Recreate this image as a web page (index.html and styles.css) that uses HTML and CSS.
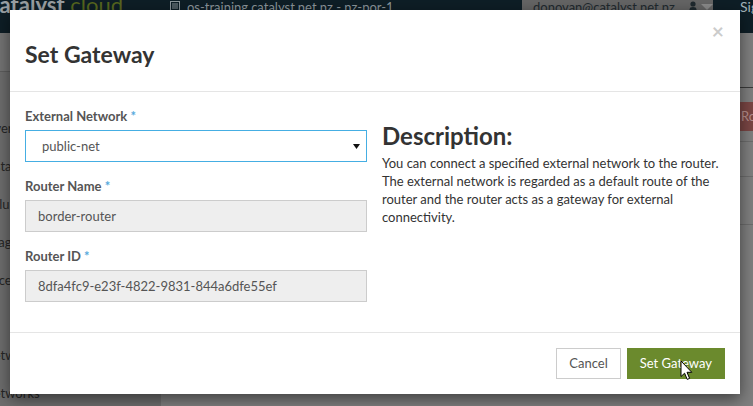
FILE: index.html
```html
<!DOCTYPE html>
<html lang="en">
<head>
<meta charset="utf-8">
<title>Set Gateway</title>
<link rel="stylesheet" href="styles.css">
</head>
<body>
<div class="page">
  <header class="topbar">
    <div class="brand"><span class="brand-strong">catalyst</span> <span class="brand-light">cloud</span></div>
    <div class="context">
      <svg class="context-icon" width="10" height="10" viewBox="0 0 10 10" aria-hidden="true"><rect x="0.5" y="0.5" width="9" height="9" fill="none" stroke="currentColor"/><path d="M2 3h6M2 5h6M2 7h6" stroke="currentColor"/></svg>
      <span>os-training.catalyst.net.nz - nz-por-1</span>
    </div>
    <div class="user">
      <span class="user-name">donovan@catalyst.net.nz</span>
      <svg class="user-icon" width="8" height="12" viewBox="0 0 8 12" aria-hidden="true"><circle cx="4" cy="3" r="2.6" fill="currentColor"/><path d="M0.5 12V8.5C0.5 6.8 1.8 6 4 6s3.5.8 3.5 2.5V12z" fill="currentColor"/></svg>
      <svg class="user-caret" width="12" height="8" viewBox="0 0 12 8" aria-hidden="true"><path d="M0 1h12L6 7z" fill="currentColor"/></svg>
    </div>
    <a class="signout">Sign Out</a>
  </header>
  <div class="layout">
    <nav class="sidebar">
      <div class="sidebar-project">Project</div>
      <div class="nav-group">Compute</div>
      <a class="nav-item">Overview</a>
      <a class="nav-item">Instances</a>
      <a class="nav-item">Volumes</a>
      <a class="nav-item">Images</a>
      <a class="nav-item">Access &amp; Security</a>
      <div class="nav-group">Network</div>
      <a class="nav-item">Network Topology</a>
      <a class="nav-item">Networks</a>
    </nav>
    <main class="content">
      <div class="page-header">Routers</div>
      <div class="toolbar"><span class="btn-danger">Routers</span></div>
      <div class="table">
        <div class="table-row head">Name</div>
        <div class="table-row tall">border-router</div>
        <div class="table-row">Displaying 1 item</div>
      </div>
    </main>
  </div>
</div>

<div class="modal" role="dialog">
  <div class="modal-header">
    <h3 class="modal-title">Set Gateway</h3>
    <span class="close">&times;</span>
  </div>
  <div class="modal-body">
    <div class="form-col">
      <div class="form-group">
        <label class="label">External Network <span class="req">*</span></label>
        <div class="select-wrap">
          <select class="select"><option>public-net</option></select>
          <svg class="select-arrow" width="7" height="5" viewBox="0 0 7 5" aria-hidden="true"><path d="M0 0h7L3.5 5z" fill="#111"/></svg>
        </div>
      </div>
      <div class="form-group">
        <label class="label">Router Name <span class="req">*</span></label>
        <input class="input" value="border-router" disabled>
      </div>
      <div class="form-group">
        <label class="label">Router ID <span class="req">*</span></label>
        <input class="input" value="8dfa4fc9-e23f-4822-9831-844a6dfe55ef" disabled>
      </div>
    </div>
    <div class="desc-col">
      <h3 class="desc-title">Description:</h3>
      <p class="desc-text">You can connect a specified external network to the router. The external network is regarded as a default route of the router and the router acts as a gateway for external connectivity.</p>
    </div>
  </div>
  <div class="modal-footer">
    <button class="btn btn-default">Cancel</button>
    <button class="btn btn-primary">Set Gateway</button>
  </div>
</div>

<svg class="cursor" width="13" height="21" viewBox="0 0 13 21" aria-hidden="true"><path d="M1 1V16.5L4.6 13.2L7.2 19.4L9.6 18.4L7 12.3H11.8Z" fill="#fff" stroke="#000" stroke-width="1" stroke-linejoin="round"/></svg>
</body>
</html>
```

FILE: styles.css
```css
html, body {
  margin: 0;
  padding: 0;
}

body {
  width: 753px;
  height: 406px;
  overflow: hidden;
  position: relative;
  background: #7f7f7f;
  font-family: Lato, "Open Sans", "Liberation Sans", sans-serif;
  font-size: 13px;
  color: #333;
}

.page {
  width: 1000px;
}

/* ---------- dimmed top bar ---------- */
.topbar {
  display: flex;
  align-items: flex-start;
  height: 33px;
  background: #0e1e26;
  overflow: hidden;
}

.brand {
  flex: none;
  width: 133px;
  margin-left: -11px;
  margin-top: -6px;
  font-size: 22px;
  line-height: 22px;
  white-space: nowrap;
}

.brand-strong {
  font-weight: 700;
  color: #9aa0a3;
}

.brand-light {
  font-weight: 400;
  color: #56661e;
}

.context {
  flex: none;
  width: 352px;
  margin-left: 48px;
  margin-top: -1px;
  display: flex;
  align-items: flex-start;
  gap: 7px;
  color: #8b959a;
  line-height: 16px;
  white-space: nowrap;
}

.context-icon {
  margin-top: 2px;
}

.user {
  flex: none;
  width: 191px;
  height: 26px;
  box-sizing: border-box;
  padding-left: 11px;
  display: flex;
  align-items: flex-start;
  background: #656565;
  color: #1f292e;
  line-height: 16px;
}

.user-name {
  margin-top: -1px;
  white-space: nowrap;
}

.user-icon {
  margin-left: 14px;
  margin-top: 1px;
}

.user-caret {
  margin-left: 4px;
  margin-top: 3px;
  color: #8a8a8a;
}

.signout {
  margin-left: 27px;
  margin-top: -1px;
  font-size: 14px;
  line-height: 16px;
  color: #a3b3ba;
  white-space: nowrap;
}

/* ---------- dimmed page behind ---------- */
.layout {
  display: flex;
  height: 373px;
}

.sidebar {
  flex: none;
  width: 221px;
  margin-left: -60px;
  background: #6e6e6e;
  display: flex;
  flex-direction: column;
  overflow: hidden;
}

.sidebar > * {
  flex: none;
}

.sidebar-project {
  height: 38px;
  border-bottom: 1px solid #5e5e5e;
  background: #747474;
  color: transparent;
}

.nav-group {
  height: 37px;
  line-height: 37px;
  padding-left: 0;
  color: #2b2b2b;
  font-weight: 700;
}

.nav-item {
  height: 38px;
  line-height: 38px;
  padding-left: 44px;
  color: #262626;
  white-space: nowrap;
}

.content {
  flex: 1;
  background: #7f7f7f;
}

.page-header {
  height: 54px;
  border-bottom: 1px solid #3a3a3a;
  color: #2a2a2a;
  font-size: 18px;
  line-height: 54px;
  padding-left: 20px;
}

.toolbar {
  padding-left: 570px;
  margin-top: 14px;
  margin-bottom: 10px;
  display: flex;
}

.btn-danger {
  height: 29px;
  line-height: 29px;
  padding: 0 10px;
  background: #7a4644;
  color: #b78f8d;
  white-space: nowrap;
}

.table-row {
  height: 34px;
  border-top: 1px solid #6c6c6c;
  color: #3a3a3a;
  line-height: 34px;
  padding-left: 20px;
}

.table-row.tall {
  height: 47px;
}

.table-row.head {
  font-weight: 700;
}

/* ---------- modal ---------- */
.modal {
  position: absolute;
  top: 10px;
  left: 10px;
  width: 730px;
  height: 384px;
  background: #fff;
  box-shadow: 0 5px 15px rgba(0, 0, 0, 0.5);
  display: flex;
  flex-direction: column;
  color: #333;
}

.modal-header {
  position: relative;
  padding: 29px 15px 22px;
  border-bottom: 1px solid #e5e5e5;
}

.modal-title {
  margin: 0;
  font-size: 23px;
  line-height: 30px;
  font-weight: 700;
  color: #333;
}

.close {
  position: absolute;
  top: 10px;
  right: 16px;
  font-size: 21px;
  line-height: 21px;
  font-weight: 700;
  color: #000;
  opacity: 0.2;
}

.modal-body {
  flex: 1;
  padding: 15px 0 0 15px;
  display: grid;
  grid-template-columns: 342px 356px;
  column-gap: 15px;
  align-items: start;
}

.form-group {
  margin-bottom: 15px;
}

.label {
  display: block;
  margin-bottom: 5px;
  font-weight: 700;
  line-height: 18px;
  color: #555;
}

.req {
  color: #55a9dc;
}

.select-wrap {
  position: relative;
}

.select {
  display: block;
  width: 100%;
  height: 32px;
  box-sizing: border-box;
  margin: 0;
  padding: 0 16px;
  border: 1px solid #45aee3;
  border-radius: 0;
  background: #fff;
  appearance: none;
  -webkit-appearance: none;
  font-family: inherit;
  font-size: 13px;
  color: #555;
  outline: none;
}

.select-arrow {
  position: absolute;
  right: 7px;
  top: 14px;
}

.input {
  display: block;
  width: 100%;
  height: 32px;
  box-sizing: border-box;
  margin: 0;
  padding: 0 12px;
  border: 1px solid #ccc;
  border-radius: 0;
  background: #eee;
  font-family: inherit;
  font-size: 13px;
  color: #555;
  -webkit-text-fill-color: #555;
  opacity: 1;
}

.desc-title {
  margin: 16px 0 5px;
  font-size: 24px;
  line-height: 26px;
  font-weight: 700;
  color: #333;
}

.desc-text {
  margin: 0;
  line-height: 18px;
  color: #333;
}

.modal-footer {
  display: flex;
  justify-content: flex-end;
  gap: 6px;
  padding: 15px;
  border-top: 1px solid #e5e5e5;
}

.btn {
  height: 31px;
  box-sizing: border-box;
  margin: 0;
  padding: 0 12px;
  border: 1px solid;
  border-radius: 0;
  font-family: inherit;
  font-size: 13px;
  line-height: 17px;
}

.btn-default {
  background: #fff;
  border-color: #ccc;
  color: #555;
}

.btn-primary {
  background: #6b8a2d;
  border-color: #6b8a2d;
  color: #fff;
}

.cursor {
  position: absolute;
  left: 680px;
  top: 360px;
}
```
